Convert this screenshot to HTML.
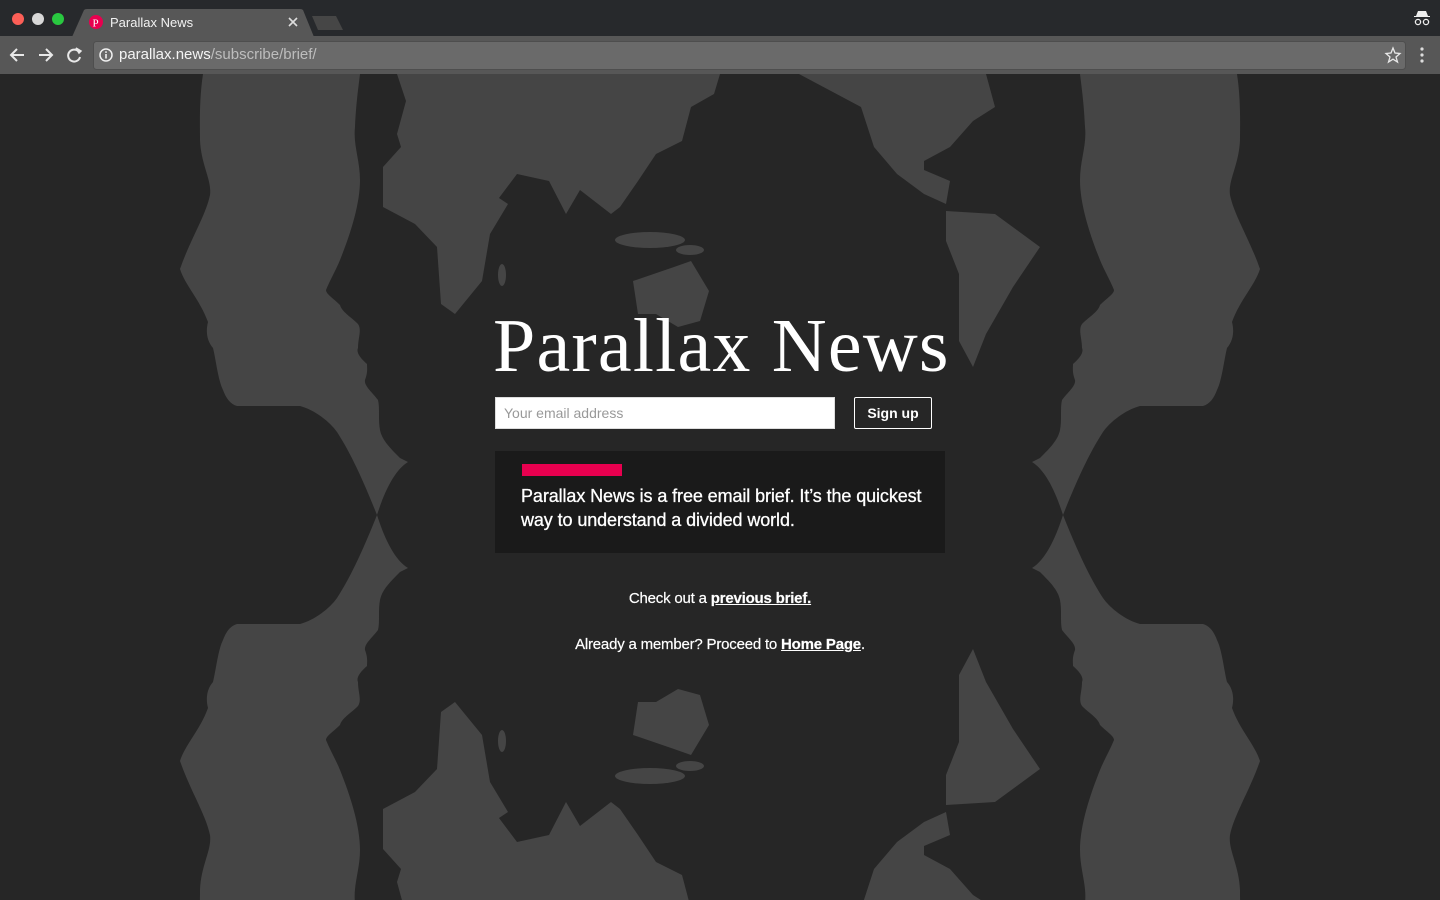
<!DOCTYPE html>
<html><head><meta charset="utf-8"><style>
*{margin:0;padding:0;box-sizing:border-box}
html,body{width:1440px;height:900px;overflow:hidden}
body{background:#262626;font-family:"Liberation Sans",Arial,sans-serif;position:relative}
.abs{position:absolute}
svg{display:block}
</style></head><body>
<div class="abs" style="left:0;top:0;width:1440px;height:37px;background:#27292c"></div>
<div class="abs" style="left:12px;top:13px;width:12px;height:12px;border-radius:50%;background:#fc5f57"></div>
<div class="abs" style="left:32px;top:13px;width:12px;height:12px;border-radius:50%;background:#d8d8d8"></div>
<div class="abs" style="left:52px;top:13px;width:12px;height:12px;border-radius:50%;background:#29c840"></div>
<svg class="abs" style="left:0;top:0" width="1440" height="74">
<path d="M72 37 L84 10 Q85 9 87 9 L300 9 Q302 9 303 10 L314 37 Z" fill="#575757"/>
<path d="M312 16 L336 16 L343 30 L318 30 Z" fill="#464646"/>
<rect x="0" y="36" width="1440" height="38" fill="#575757"/>
<rect x="93.5" y="41.5" width="1312" height="28" rx="3" fill="#6a6a6a" stroke="#4e4e4e"/>
<circle cx="96" cy="22" r="7" fill="#e8004f"/>
<text x="92.5" y="26.5" font-family="Liberation Serif" font-size="11" fill="#fff">P</text>
<path d="M289 18 L297 26 M297 18 L289 26" stroke="#ddd" stroke-width="1.6"/>
<path d="M24 55 L11 55 M17 49 L11 55 L17 61" stroke="#e8e8e8" stroke-width="2" fill="none"/>
<path d="M39 55 L52 55 M46 49 L52 55 L46 61" stroke="#e8e8e8" stroke-width="2" fill="none"/>
<path d="M79 52 A6 6 0 1 0 80 57" stroke="#e8e8e8" stroke-width="2" fill="none"/><path d="M76 48 L81 51 L79 53 Z" fill="#e8e8e8" stroke="#e8e8e8" stroke-width="1.5"/>
<circle cx="106" cy="55" r="6" fill="none" stroke="#f0f0f0" stroke-width="1.5"/><rect x="105.2" y="54" width="1.6" height="4.5" fill="#f0f0f0"/><rect x="105.2" y="51.3" width="1.6" height="1.6" fill="#f0f0f0"/>
<path d="M1393 48 L1395 53 L1400 53.5 L1396 57 L1397.5 62 L1393 59.2 L1388.5 62 L1390 57 L1386 53.5 L1391 53 Z" fill="none" stroke="#e8e8e8" stroke-width="1.3"/>
<circle cx="1422" cy="49" r="1.6" fill="#ddd"/><circle cx="1422" cy="55" r="1.6" fill="#ddd"/><circle cx="1422" cy="61" r="1.6" fill="#ddd"/>
<path d="M1416 16 L1418 11 L1426 11 L1428 16 Z M1414 16 L1430 16 L1430 17 L1414 17Z" fill="#eee"/>
<circle cx="1418" cy="22" r="2.6" fill="none" stroke="#eee" stroke-width="1.3"/><circle cx="1426" cy="22" r="2.6" fill="none" stroke="#eee" stroke-width="1.3"/>
</svg>
<div class="abs" style="left:110px;top:15px;font-size:13px;color:#f2f2f2">Parallax News</div>
<div class="abs" style="left:119px;top:46px;font-size:15px;color:#f4f4f4">parallax.news<span style="color:#bdbdbd">/subscribe/brief/</span></div>
<svg class="abs" style="left:0;top:74px" width="1440" height="826" viewBox="0 74 1440 826">
<defs>
<path id="band" d="M203 74 C199 100 200 127 200 140 C201 165 212 180 210 195 C206 215 190 240 180 269 C185 285 200 300 208 322 C206 330 206 340 213 348 C216 360 218 380 223 390 C226 398 230 404 237 406 L300 406 C315 410 330 422 337 432 C352 455 365 485 377 515 C385 490 395 470 408 462 L400 458 C390 448 382 440 380 430 C378 420 380 408 378 400 C372 392 364 386 365 380 C368 372 367 368 367 364 C360 358 356 352 358 348 C358 338 362 330 358 324 C350 316 342 312 340 305 C333 298 326 294 326 290 C330 280 336 270 340 260 C350 235 360 205 360 180 C360 160 353 145 355 127 C356 105 358 90 360 74 Z"/>
<g id="map">
<path d="M397 74 L406 101 L397 134 L401 147 L383 167 L383 207 L415 224 L437 247 L441 304 L455 314 L482 281 L490 234 L508 204 L499 198 L517 174 L549 181 L566 214 L580 190 L611 214 L620 207 L638 181 L656 154 L682 141 L691 107 L714 94 L720 74 Z"/>
<path d="M799 74 L861 107 L874 147 L897 174 L924 194 L946 204 L950 181 L924 170 L924 161 L950 147 L973 121 L995 107 L986 74 Z"/>
<path d="M946 211 L995 214 L1040 247 L1013 287 L986 334 L973 367 L959 341 L959 274 L946 241 Z"/>
<path d="M633 281 L674 267 L691 261 L709 291 L700 321 L678 327 L656 314 L638 314 Z"/>
<ellipse cx="650" cy="240" rx="35" ry="8"/><ellipse cx="690" cy="250" rx="14" ry="5"/>
<ellipse cx="502" cy="275" rx="4" ry="11"/>
</g>
</defs>
<g fill="#454545">
<use href="#band"/>
<use href="#band" transform="translate(0,1030) scale(1,-1)"/>
<g transform="translate(1440,0) scale(-1,1)"><use href="#band"/><use href="#band" transform="translate(0,1030) scale(1,-1)"/></g>
<use href="#map"/>
<use href="#map" transform="translate(0,1016) scale(1,-1)"/>
</g>
</svg>
<div class="abs" style="left:493px;top:303px;width:470px;font-family:'Liberation Serif',serif;font-size:76px;color:#fff;white-space:nowrap;line-height:86px;letter-spacing:1.2px">Parallax News</div>
<div class="abs" style="left:495px;top:397px;width:340px;height:32px;background:#fff;border:1px solid #ddd;font-size:14px;color:#999;padding:7px 8px">Your email address</div>
<div class="abs" style="left:854px;top:397px;width:78px;height:32px;border:1px solid #fff;border-radius:2px;background:#262626;color:#fff;font-size:14px;font-weight:bold;text-align:center;line-height:30px">Sign up</div>
<div class="abs" style="left:495px;top:451px;width:450px;height:102px;background:#1a1a1a"></div>
<div class="abs" style="left:522px;top:464px;width:100px;height:12px;background:#e8004f"></div>
<div class="abs" style="left:521px;top:484px;width:410px;font-size:18px;line-height:24px;color:#fff;letter-spacing:-0.1px;-webkit-text-stroke:0.3px #fff">Parallax News is a free email brief. It’s the quickest way to understand a divided world.</div>
<div class="abs" style="left:0;top:590px;width:1440px;text-align:center;font-size:15px;color:#fff;letter-spacing:-0.2px;-webkit-text-stroke:0.2px #fff">Check out a <b style="text-decoration:underline">previous brief.</b></div>
<div class="abs" style="left:0;top:636px;width:1440px;text-align:center;font-size:15px;color:#fff;letter-spacing:-0.2px;-webkit-text-stroke:0.2px #fff">Already a member? Proceed to <b style="text-decoration:underline">Home Page</b>.</div>
</body></html>
